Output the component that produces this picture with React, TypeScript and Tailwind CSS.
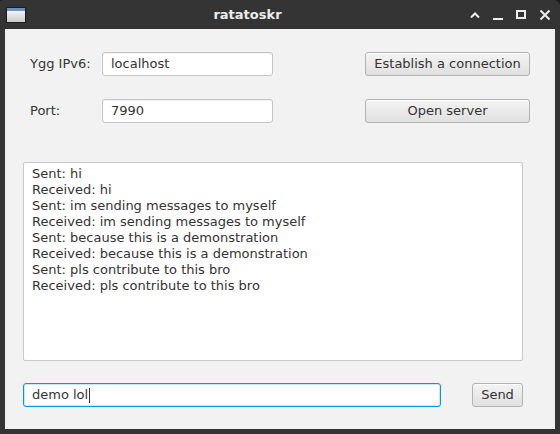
import React from "react";

const font = { fontFamily: '"DejaVu Sans", Verdana, sans-serif' };

const lines = [
  "Sent: hi",
  "Received: hi",
  "Sent: im sending messages to myself",
  "Received: im sending messages to myself",
  "Sent: because this is a demonstration",
  "Received: because this is a demonstration",
  "Sent: pls contribute to this bro",
  "Received: pls contribute to this bro",
];

function Btn({ children, className }: { children: React.ReactNode; className: string }) {
  return (
    <div
      className={
        "flex items-center justify-center rounded-[3px] border border-[#b3b3b3] bg-gradient-to-b from-[#f4f4f4] to-[#e0e0e0] text-[13px] text-[#333] shadow-[inset_0_1px_0_#fff] " +
        className
      }
    >
      {children}
    </div>
  );
}

function Field({ value, className }: { value: string; className: string }) {
  return (
    <div
      className={
        "flex items-center rounded-[3px] border border-[#c4c4c4] bg-white pl-[8px] text-[13px] text-[#333] shadow-[inset_0_1px_1px_rgba(0,0,0,0.06)] " +
        className
      }
    >
      {value}
    </div>
  );
}

export default function App() {
  return (
    <div className="h-[434px] w-[560px] bg-[#1c1c1c]" style={font}>
      <div className="flex h-[434px] w-[560px] flex-col rounded-tr-[6px] rounded-tl-[3px] bg-[#343434] px-[5px] pb-[5px]">
        {/* title bar */}
        <div className="flex h-[29px] items-center">
          <div className="ml-[1px] flex h-[16px] w-[20px] flex-col overflow-hidden border border-[#1e1e1e]">
            <div className="h-[3px] bg-[#6d8fc5]" />
            <div className="flex-1 bg-gradient-to-b from-[#f4f4f4] to-[#c9c9c9]" />
          </div>
          <div className="flex flex-1 justify-center text-[13px] font-bold text-[#ececec]">ratatoskr</div>
          <div className="flex items-center">
            <svg width="12" height="8" viewBox="0 0 12 8" className="mr-[11px] mt-[1px]">
              <path d="M2 6.5 L6 2.5 L10 6.5" stroke="#eee" strokeWidth="2" fill="none" />
            </svg>
            <svg width="12" height="12" viewBox="0 0 12 12" className="mr-[11px]">
              <rect x="1" y="9" width="10" height="2" fill="#eee" />
            </svg>
            <svg width="12" height="12" viewBox="0 0 12 12" className="mr-[12px]">
              <rect x="2" y="2" width="8" height="7" stroke="#eee" strokeWidth="2" fill="none" />
            </svg>
            <svg width="12" height="12" viewBox="0 0 12 12" className="mr-[4px]">
              <path d="M1.5 1.5 L10.5 10.5 M10.5 1.5 L1.5 10.5" stroke="#eee" strokeWidth="2" fill="none" />
            </svg>
          </div>
        </div>
        {/* content */}
        <div className="flex flex-1 flex-col bg-[#f2f2f2] pt-[23px]">
          <div className="flex h-[24px] items-center">
            <div className="w-[97px] pl-[25px] text-[13px] text-[#333]">Ygg IPv6:</div>
            <Field value="localhost" className="h-[24px] w-[171px]" />
            <div className="flex-1" />
            <Btn className="mr-[25px] h-[24px] w-[165px]">Establish a connection</Btn>
          </div>
          <div className="mt-[23px] flex h-[24px] items-center">
            <div className="w-[97px] pl-[25px] text-[13px] text-[#333]">Port:</div>
            <Field value="7990" className="h-[24px] w-[171px]" />
            <div className="flex-1" />
            <Btn className="mr-[25px] h-[24px] w-[165px]">Open server</Btn>
          </div>
          <div className="ml-[18px] mt-[39px] h-[199px] w-[500px] rounded-[2px] border border-[#c8c8c8] bg-white pl-[8px] pt-[3px] text-[13px] leading-[16px] text-[#333]">
            {lines.map((l, i) => (
              <div key={i}>{l}</div>
            ))}
          </div>
          <div className="mt-[22px] flex h-[24px] items-center">
            <div className="ml-[18px] flex h-[24px] w-[418px] items-center rounded-[3px] border border-[#0b97ce] bg-white pl-[8px] text-[13px] text-[#333] shadow-[inset_0_0_0_1px_#c6e9f6]">
              demo lol
              <span className="ml-[1px] inline-block h-[15px] w-[1px] bg-[#333]" />
            </div>
            <div className="flex-1" />
            <Btn className="mr-[32px] h-[24px] w-[51px]">Send</Btn>
          </div>
        </div>
      </div>
    </div>
  );
}
